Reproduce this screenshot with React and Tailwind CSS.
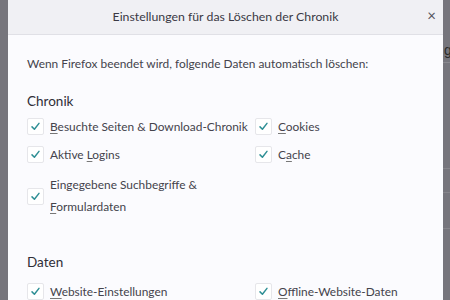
import React from 'react';

function Check({ label, accessKey }) {
  const i = label.indexOf(accessKey);
  return (
    <span>
      {label.slice(0, i)}
      <span className="underline underline-offset-2 decoration-[#777]">{label.slice(i, i + 1)}</span>
      {label.slice(i + 1)}
    </span>
  );
}

function Box() {
  return (
    <div className="w-[17px] h-[17px] shrink-0 border border-[#e6e6ea] rounded-[2px] bg-white flex items-center justify-center">
      <svg width="11" height="11" viewBox="0 0 12 12">
        <path d="M2.2 6.4 L4.8 9 L9.8 2.6" fill="none" stroke="#2e8f95" strokeWidth="1.6" strokeLinecap="round" strokeLinejoin="round" />
      </svg>
    </div>
  );
}

function Item({ label, k }) {
  return (
    <div className="flex items-center gap-[6px]">
      <Box />
      <div className="leading-[23px] whitespace-nowrap">
        <Check label={label} accessKey={k} />
      </div>
    </div>
  );
}

export default function App() {
  return (
    <div
      className="w-[450px] h-[300px] overflow-hidden bg-[#76757c] flex text-[#2b2a33]"
      style={{ fontFamily: 'Lato, "Open Sans", sans-serif' }}
    >
      <div className="w-[8px] shrink-0" />
      <div className="w-[435px] shrink-0 flex flex-col bg-[#fbfbfe]">
        <div className="h-[35px] shrink-0 bg-[#f0f0f4] border-b border-[#e0e0e6] flex items-center relative">
          <div className="flex-1 text-center text-[12.3px] text-[#3a3944]">Einstellungen für das Löschen der Chronik</div>
          <div className="absolute right-[7px] top-[8px] text-[15px] leading-none text-[#55545c]">×</div>
        </div>
        <div className="px-[19px] text-[11.9px] text-[#44434c]">
          <div className="mt-[19px] leading-[20px]">Wenn Firefox beendet wird, folgende Daten automatisch löschen:</div>
          <div className="mt-[17px] text-[13.5px] leading-[20px] text-[#2f2e37]">Chronik</div>
          <div className="grid grid-cols-[228px_1fr] gap-y-[5px] mt-[4px]">
            <Item label="Besuchte Seiten & Download-Chronik" k="B" />
            <Item label="Cookies" k="C" />
            <Item label="Aktive Logins" k="L" />
            <Item label="Cache" k="a" />
            <div className="flex items-center gap-[6px] mt-[3px]">
              <Box />
              <div className="leading-[22px]">
                <div>Eingegebene Suchbegriffe &</div>
                <div><Check label="Formulardaten" accessKey="F" /></div>
              </div>
            </div>
          </div>
          <div className="mt-[34px] text-[13.5px] leading-[20px] text-[#2f2e37]">Daten</div>
          <div className="grid grid-cols-[228px_1fr] mt-[8px]">
            <Item label="Website-Einstellungen" k="W" />
            <Item label="Offline-Website-Daten" k="O" />
          </div>
        </div>
      </div>
      <div className="flex-1 flex flex-col">
        <div className="h-[42px]" />
        <div className="text-[14px] leading-[16px] text-[#2a2a2a] pl-[1px]" style={{ fontFamily: '"Liberation Sans", sans-serif' }}>g</div>
        <div className="h-[1px] bg-[#8a898f] mt-[4px]" />
        <div className="h-[1px] bg-[#86858b] mt-[105px]" />
        <div className="h-[1px] bg-[#86858b] mt-[23px]" />
        <div className="h-[1px] bg-[#86858b] mt-[35px]" />
      </div>
    </div>
  );
}
